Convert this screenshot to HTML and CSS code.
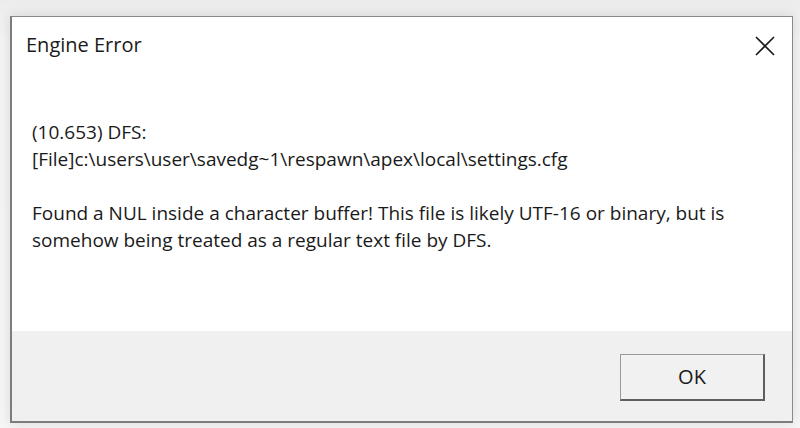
FILE: index.html
```html
<!DOCTYPE html>
<html lang="en">
<head>
    <meta charset="UTF-8">
    <meta name="viewport" content="width=device-width, initial-scale=1.0">
    <title>Engine Error</title>
    <link rel="stylesheet" href="styles.css">
</head>
<body>

    <div class="window">
        <div class="titlebar">
            <span class="title">Engine Error</span>
            <button class="close" aria-label="Close">
                <svg width="20" height="20" viewBox="0 0 20 20">
                    <path d="M1 1 L19 19 M19 1 L1 19" stroke="#1a1a1a" stroke-width="1.6" fill="none"/>
                </svg>
            </button>
        </div>

        <div class="content">
            <p>(10.653) DFS:<br>[File]c:\users\user\savedg~1\respawn\apex\local\settings.cfg</p>
            <p>Found a NUL inside a character buffer! This file is likely UTF-16 or binary, but is<br>somehow being treated as a regular text file by DFS.</p>
        </div>

        <div class="footer">
            <button class="btn">OK</button>
        </div>
    </div>

</body>
</html>
```

FILE: styles.css
```css
* {
    margin: 0;
    padding: 0;
    box-sizing: border-box;
    font-family: "Open Sans", "Noto Sans", Arial, sans-serif;
}
body {
    background: linear-gradient(180deg, #ececec, #f4f4f4 40px, #f6f6f6);
    height: 100vh;
    overflow: hidden;
}
.window {
    margin: 16px 0 0 10px;
    width: 783px;
    height: 407px;
    background: white;
    border: 1px solid #8a8a8a;
    border-left: 2px solid #7d7d7d;
    border-bottom: 2px solid #7d7d7d;
    box-shadow: 0 0 12px rgba(0, 0, 0, 0.12);
    display: flex;
    flex-direction: column;
}
.titlebar {
    display: flex;
    justify-content: space-between;
    align-items: flex-start;
    height: 66px;
    padding: 14px 14px 0 14px;
}
.title {
    font-size: 20px;
    color: #1a1a1a;
    line-height: 28px;
}
.close {
    background: none;
    border: none;
    margin-top: 5px;
    margin-right: 3px;
    width: 20px;
    height: 20px;
}
.content {
    flex: 1;
    padding: 36px 20px 0 20px;
    color: #1a1a1a;
    font-size: 19px;
    line-height: 27px;
}
.content p {
    margin-bottom: 27px;
}
.footer {
    height: 90px;
    background: #f0f0f0;
    display: flex;
    justify-content: flex-end;
    align-items: center;
    padding-right: 27px;
}
.btn {
    width: 145px;
    height: 47px;
    background: #f1f1f1;
    border: 1px solid #9a9a9a;
    border-right: 2px solid #5e5e5e;
    border-bottom: 2px solid #5e5e5e;
    font-size: 20px;
    color: #1a1a1a;
    margin-top: 2px;
}
```
